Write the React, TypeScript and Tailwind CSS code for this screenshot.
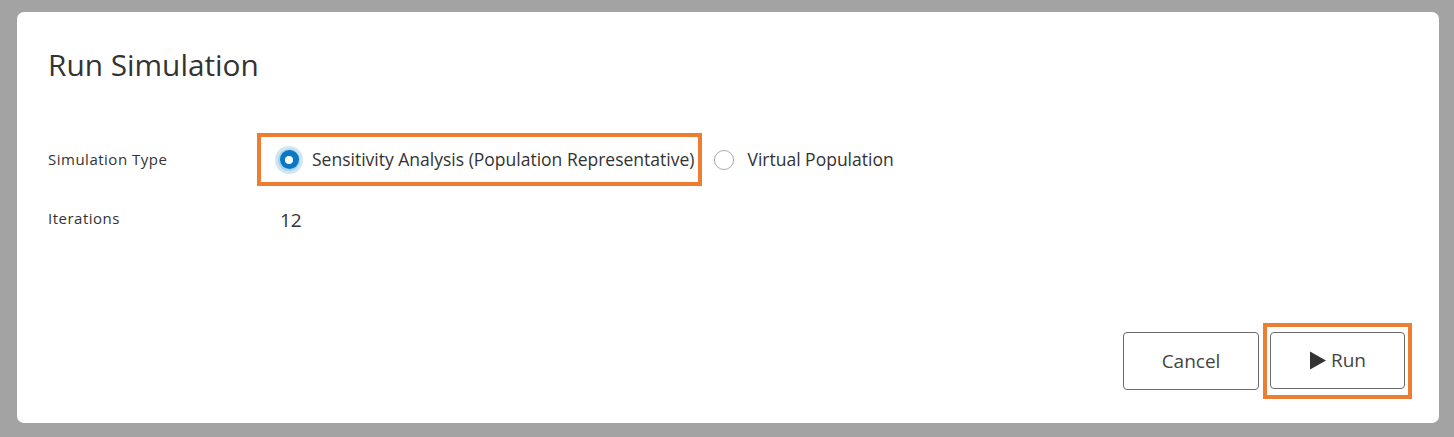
import { useState } from 'react';

const font = { fontFamily: '"Open Sans", "Noto Sans", sans-serif' };

function Radio({ checked, label, onSelect }: { checked: boolean; label: string; onSelect: () => void }) {
  return (
    <label className="flex items-center cursor-pointer" onClick={onSelect}>
      <span className="relative flex h-[30px] w-[30px] items-center justify-center">
        {checked ? (
          <>
            <span className="absolute inset-[1px] rounded-full bg-[#cfe6f5]" />
            <span className="absolute inset-[4px] rounded-full bg-[#a9d3ee]" />
            <span className="relative flex h-[19px] w-[19px] items-center justify-center rounded-full bg-[#0a76c4]">
              <span className="h-[8px] w-[8px] rounded-full bg-white" />
            </span>
          </>
        ) : (
          <span className="h-[20px] w-[20px] rounded-full border-[1.5px] border-[#a7a9ad] bg-white" />
        )}
      </span>
      <span className="ml-[8px] text-[17.5px] text-[#333]">{label}</span>
    </label>
  );
}

export default function App() {
  const [type, setType] = useState<'sa' | 'vp'>('sa');

  return (
    <div className="h-[437px] w-[1454px] bg-[#a3a3a3] pl-[17px] pt-[12px]" style={font}>
      <div className="flex h-[411px] w-[1422px] flex-col rounded-[7px] bg-white">
        <h1 className="pl-[31px] pt-[33px] text-[29.8px] leading-[40px] text-[#333]">Run Simulation</h1>

        <div className="mt-[48px] flex items-center">
          <div className="w-[240px] pl-[31px] text-[15px] tracking-[0.5px] text-[#333]">Simulation Type</div>
          <div className="flex items-center">
            <div className="flex h-[53px] items-center border-4 border-[#ed7d31] pl-[13px] pr-[4px]">
              <Radio checked={type === 'sa'} label="Sensitivity Analysis (Population Representative)" onSelect={() => setType('sa')} />
            </div>
            <div className="ml-[7px]">
              <Radio checked={type === 'vp'} label="Virtual Population" onSelect={() => setType('vp')} />
            </div>
          </div>
        </div>

        <div className="mt-[17px] flex h-[30px] items-center">
          <div className="w-[240px] pl-[31px] text-[15px] tracking-[0.5px] text-[#333]">Iterations</div>
          <div className="ml-[23px] mt-[5px] text-[19px] text-[#333]">12</div>
        </div>

        <div className="mt-auto flex items-center justify-end gap-[4px] pb-[24px] pr-[27px]">
          <button className="h-[58px] w-[136px] rounded-[4px] border border-[#6b6b6b] bg-white text-[19px] text-[#444]">
            Cancel
          </button>
          <div className="border-4 border-[#ed7d31] px-[3px] pb-[6px] pt-[5px]">
            <button className="flex h-[57px] w-[135px] items-center justify-center rounded-[4px] border border-[#6b6b6b] bg-white text-[19px] text-[#444]">
              <svg width="18" height="19" viewBox="0 0 18 19" className="mr-[4px]">
                <path d="M1 0.5 L17 9.5 L1 18.5 Z" fill="#333" />
              </svg>
              Run
            </button>
          </div>
        </div>
      </div>
    </div>
  );
}
